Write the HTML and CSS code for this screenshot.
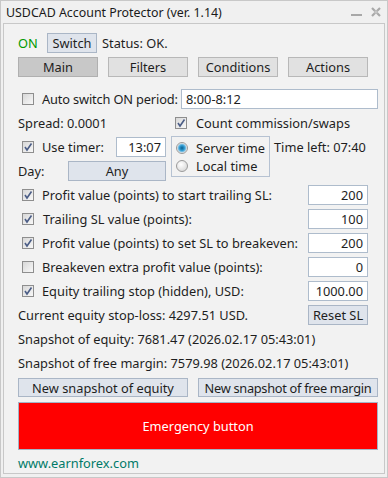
FILE: index.html
```html
<!DOCTYPE html>
<html>
<head>
<meta charset="utf-8">
<link rel="stylesheet" href="styles.css">
</head>
<body>
<div class="window">
  <div class="titlebar">
    <span class="title">USDCAD Account Protector (ver. 1.14)</span>
    <span class="tb-icons">
      <svg class="ico-min" width="11" height="3" viewBox="0 0 11 3"><rect x="0" y="0" width="11" height="2" fill="#a8a8a8"/></svg>
      <svg class="ico-close" width="10" height="10" viewBox="0 0 10 10"><path d="M1 1 L9 9 M9 1 L1 9" stroke="#a8a8a8" stroke-width="2.2"/><rect x="3.5" y="3.5" width="3" height="3" fill="#c4c4c4"/></svg>
    </span>
  </div>
  <div class="panel">
    <div class="row row-status">
      <span class="on">ON</span>
      <span class="btn btn-switch">Switch</span>
      <span class="status">Status: OK.</span>
    </div>
    <div class="row tabs">
      <span class="tab active">Main</span>
      <span class="tab">Filters</span>
      <span class="tab">Conditions</span>
      <span class="tab">Actions</span>
    </div>
    <div class="row row-auto">
      <span class="cb"></span>
      <span class="lbl lbl-auto">Auto switch ON period:</span>
      <span class="input input-period">8:00-8:12</span>
    </div>
    <div class="row row-spread">
      <span class="spread">Spread: 0.0001</span>
      <span class="cb checked"><svg viewBox="0 0 12 12" width="12" height="12"><path d="M3 6 L5 9 L9.5 2.5" fill="none" stroke="#4b5d86" stroke-width="1.6"/></svg></span>
      <span class="lbl lbl-count">Count commission/swaps</span>
    </div>
    <div class="timer-block">
      <div class="timer-left">
        <div class="row row-timer">
          <span class="cb checked"><svg viewBox="0 0 12 12" width="12" height="12"><path d="M3 6 L5 9 L9.5 2.5" fill="none" stroke="#4b5d86" stroke-width="1.6"/></svg></span>
          <span class="lbl lbl-timer">Use timer:</span>
          <span class="input input-time">13:07</span>
        </div>
        <div class="row row-day">
          <span class="day">Day:</span>
          <span class="btn btn-any">Any</span>
        </div>
      </div>
      <div class="radio-box">
        <div class="radio-row"><span class="radio on-radio"></span><span class="rlbl">Server time</span></div>
        <div class="radio-row"><span class="radio"></span><span class="rlbl">Local time</span></div>
      </div>
      <div class="timeleft">Time left: 07:40</div>
    </div>
    <div class="row opt">
      <span class="cb checked"><svg viewBox="0 0 12 12" width="12" height="12"><path d="M3 6 L5 9 L9.5 2.5" fill="none" stroke="#4b5d86" stroke-width="1.6"/></svg></span>
      <span class="lbl">Profit value (points) to start trailing SL:</span>
      <span class="input input-num">200</span>
    </div>
    <div class="row opt">
      <span class="cb checked"><svg viewBox="0 0 12 12" width="12" height="12"><path d="M3 6 L5 9 L9.5 2.5" fill="none" stroke="#4b5d86" stroke-width="1.6"/></svg></span>
      <span class="lbl lbl-ind">Trailing SL value (points):</span>
      <span class="input input-num">100</span>
    </div>
    <div class="row opt">
      <span class="cb checked"><svg viewBox="0 0 12 12" width="12" height="12"><path d="M3 6 L5 9 L9.5 2.5" fill="none" stroke="#4b5d86" stroke-width="1.6"/></svg></span>
      <span class="lbl">Profit value (points) to set SL to breakeven:</span>
      <span class="input input-num">200</span>
    </div>
    <div class="row opt">
      <span class="cb"></span>
      <span class="lbl">Breakeven extra profit value (points):</span>
      <span class="input input-num">0</span>
    </div>
    <div class="row opt">
      <span class="cb checked"><svg viewBox="0 0 12 12" width="12" height="12"><path d="M3 6 L5 9 L9.5 2.5" fill="none" stroke="#4b5d86" stroke-width="1.6"/></svg></span>
      <span class="lbl">Equity trailing stop (hidden), USD:</span>
      <span class="input input-num">1000.00</span>
    </div>
    <div class="row opt">
      <span class="text">Current equity stop-loss: 4297.51 USD.</span>
      <span class="btn btn-reset">Reset SL</span>
    </div>
    <div class="row info">
      <span class="text">Snapshot of equity: 7681.47 (2026.02.17 05:43:01)</span>
    </div>
    <div class="row info">
      <span class="text">Snapshot of free margin: 7579.98 (2026.02.17 05:43:01)</span>
    </div>
    <div class="row snaps">
      <span class="btn btn-snap1">New snapshot of equity</span>
      <span class="btn btn-snap2">New snapshot of free margin</span>
    </div>
    <div class="emergency">Emergency button</div>
    <div class="row footer">www.earnforex.com</div>
  </div>
</div>
</body>
</html>
```
FILE: styles.css
```css
* { box-sizing: border-box; }
html, body { margin: 0; padding: 0; background: #f0f0f0; }
body {
  font-family: "Noto Sans", "DejaVu Sans", sans-serif;
  font-size: 12.8px;
  color: #1e1e1e;
}
.window {
  width: 388px;
  height: 478px;
  border: 1px solid #c8c8c8;
  background: #f0f0f0;
  padding: 0 2px 3px 2px;
  display: flex;
  flex-direction: column;
}
.titlebar {
  height: 22px;
  display: flex;
  align-items: center;
  justify-content: space-between;
  padding-left: 3px;
  padding-right: 4px;
}
.title { font-size: 12.4px; color: #1a1a1a; }
.tb-icons { display: flex; align-items: center; gap: 9px; }
.ico-min { margin-top: 6px; }
.panel {
  flex: 1;
  border: 1px solid #c8c8c8;
  background: #f2f2f2;
  padding-left: 14px;
  display: flex;
  flex-direction: column;
}
.row {
  display: flex;
  align-items: center;
  height: 20px;
  flex: none;
  white-space: nowrap;
}
.btn {
  display: flex;
  align-items: center;
  justify-content: center;
  background: #dfe4ec;
  border: 1px solid #aab6c6;
  height: 20px;
  white-space: nowrap;
}
.row-status { margin-top: 9px; }
.on { width: 29px; color: #009a00; }
.btn-switch { width: 50px; height: 20px; }
.status { margin-left: 5px; }
.tabs { margin-top: 4px; gap: 10px; }
.tab {
  width: 80px;
  height: 20px;
  display: flex;
  align-items: center;
  justify-content: center;
  background: #e1e1e1;
  border: 1px solid #b8b8b8;
}
.tab.active { background: #c8c8c8; border-color: #b0b0b0; }
.cb {
  width: 12px;
  height: 12px;
  border: 1px solid #8e8e8e;
  background: linear-gradient(135deg, #d8d8d8, #f8f8f8);
  margin-left: 4px;
  flex: none;
  display: flex;
}
.cb svg { display: block; margin: -1px; }
.lbl { margin-left: 8px; }
.lbl-ind { margin-left: 9px; }
.input {
  background: #fff;
  border: 1px solid #aebccc;
  height: 20px;
  display: flex;
  align-items: center;
  padding: 0 4px;
}
.row-auto { margin-top: 12px; }
.lbl-auto { width: 139px; flex: none; letter-spacing: -0.15px; }
.input-period { width: 197px; }
.row-spread { margin-top: 4px; }
.spread { width: 153px; flex: none; }
.lbl-count { margin-left: 9px; }
.timer-block {
  display: flex;
  margin-top: 3px;
  height: 45px;
  flex: none;
  white-space: nowrap;
}
.timer-left { width: 148px; padding-top: 1px; flex: none; }
.lbl-timer { width: 74px; flex: none; }
.input-time { width: 50px; justify-content: flex-end; }
.row-day { margin-top: 4px; }
.day { width: 50px; flex: none; }
.btn-any { width: 98px; }
.radio-box {
  margin-left: 5px;
  width: 99px;
  height: 41px;
  border: 1px solid #b6c2d2;
  padding: 2px 0 0 4px;
  flex: none;
}
.radio-row { display: flex; align-items: center; height: 18px; }
.radio {
  width: 12px;
  height: 12px;
  border-radius: 50%;
  border: 1px solid #9a9a9a;
  background: radial-gradient(circle at 40% 35%, #ffffff, #d0d0d0);
  flex: none;
}
.radio.on-radio {
  background: radial-gradient(circle at 50% 50%, #0b5f8f 0, #2f9ad0 2.5px, #8cc8e8 4px, #e8e8e8 4.8px, #f4f4f4 6px);
}
.rlbl { margin-left: 8px; }
.timeleft { margin-left: 4px; height: 20px; margin-top: 1px; display: flex; align-items: center; }
.opt { margin-top: 4px; }
.opt .lbl, .opt .text { flex: 1; }
.input-num { width: 60px; margin-right: 16px; justify-content: flex-end; }
.btn-reset { width: 60px; margin-right: 16px; }
.info { margin-top: 4px; }
.snaps { margin-top: 5px; gap: 10px; height: 19px; }
.btn-snap1 { width: 170px; height: 19px; }
.btn-snap2 { width: 180px; height: 19px; letter-spacing: -0.3px; }
.emergency {
  margin-top: 5px;
  width: 360px;
  height: 48px;
  background: #ff0000;
  border: 1px solid #a4b4c6;
  color: #ffffff;
  display: flex;
  align-items: center;
  justify-content: center;
  flex: none;
}
.footer { margin-top: 3px; color: #007a68; }
```
